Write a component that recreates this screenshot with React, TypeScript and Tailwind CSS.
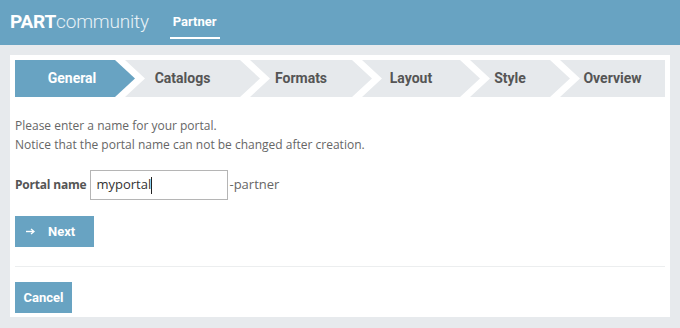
import { useState } from 'react';

const tabs = [
  { label: 'General', cls: 'w-[120px] pl-[14px] pr-[20px] [clip-path:polygon(0_0,calc(100%_-_20px)_0,100%_50%,calc(100%_-_20px)_100%,0_100%)]' },
  { label: 'Catalogs', cls: 'w-[135px] -ml-[10px] pr-[20px] [clip-path:polygon(0_0,calc(100%_-_20px)_0,100%_50%,calc(100%_-_20px)_100%,0_100%,20px_50%)]' },
  { label: 'Formats', cls: 'w-[122px] -ml-[10px] pr-[20px] [clip-path:polygon(0_0,calc(100%_-_20px)_0,100%_50%,calc(100%_-_20px)_100%,0_100%,20px_50%)]' },
  { label: 'Layout', cls: 'w-[118px] -ml-[10px] pr-[20px] [clip-path:polygon(0_0,calc(100%_-_20px)_0,100%_50%,calc(100%_-_20px)_100%,0_100%,20px_50%)]' },
  { label: 'Style', cls: 'w-[100px] -ml-[10px] pr-[20px] [clip-path:polygon(0_0,calc(100%_-_20px)_0,100%_50%,calc(100%_-_20px)_100%,0_100%,20px_50%)]' },
  { label: 'Overview', cls: 'w-[105px] -ml-[10px] [clip-path:polygon(0_0,100%_0,100%_100%,0_100%,20px_50%)]' },
];

export default function App() {
  const [name, setName] = useState('myportal');
  const [step] = useState(0);

  return (
    <div className="w-[680px] h-[328px] bg-[#e7eaed] font-['Open_Sans',sans-serif] overflow-hidden">
      <header className="h-[45px] bg-[#68a3c2] flex items-center px-[10px]">
        <div className="text-white text-[19px] leading-none font-['Roboto',sans-serif] tracking-[-0.2px] mt-[-2px]">
          <span className="font-bold">PART</span>
          <span className="font-light text-[#e9f2f7]">community</span>
        </div>
        <div className="ml-[21px] mt-[6px] px-[3px] pb-[5px] border-b-2 border-white text-white text-[13px] font-bold font-['Roboto',sans-serif]">
          Partner
        </div>
      </header>

      <div className="mt-[10px] ml-[10px] w-[660px] h-[262px] bg-white p-[5px]">
        <div className="flex h-[37px]">
          {tabs.map((t, i) => (
            <div
              key={t.label}
              className={`${t.cls} shrink-0 flex items-center justify-center text-[14px] font-bold font-['Roboto',sans-serif] ${
                i === step ? 'bg-[#68a3c2] text-white' : 'bg-[#e6e9ec] text-[#555]'
              }`}
            >
              {t.label}
            </div>
          ))}
        </div>

        <div className="mt-[19px] text-[12px] leading-[19px] text-[#666]">
          <p>Please enter a name for your portal.</p>
          <p>Notice that the portal name can not be changed after creation.</p>
        </div>

        <div className="mt-[16px] flex items-center h-[30px]">
          <label className="text-[12px] font-bold text-[#555] mr-[4px] tracking-[-0.2px]">Portal name</label>
          <div className="w-[138px] h-[30px] border border-[#b5b5b5] flex items-center px-[5px] text-[13px] text-[#333]">
            <span>{name}</span>
            <span className="w-px h-[17px] bg-[#222]" />
            <input className="sr-only" value={name} onChange={(e) => setName(e.target.value)} />
          </div>
          <span className="ml-px text-[13px] text-[#666]">-partner</span>
        </div>

        <button className="mt-[16px] h-[31px] w-[79px] bg-[#68a3c2] text-white flex items-center pl-[11px] text-[13px] font-bold font-['Roboto',sans-serif]">
          <svg width="9" height="7" viewBox="0 0 9 7" className="mr-[13px]">
            <path d="M0 3.5H7" stroke="white" strokeWidth="1.4" />
            <path d="M5 1L8 3.5L5 6" stroke="white" strokeWidth="1.4" fill="none" />
          </svg>
          Next
        </button>

        <div className="mt-[19px] h-px bg-[#eceeef]" />

        <button className="mt-[15px] h-[31px] w-[57px] bg-[#68a3c2] text-white flex items-center justify-center text-[13px] font-bold font-['Roboto',sans-serif]">
          Cancel
        </button>
      </div>
    </div>
  );
}
